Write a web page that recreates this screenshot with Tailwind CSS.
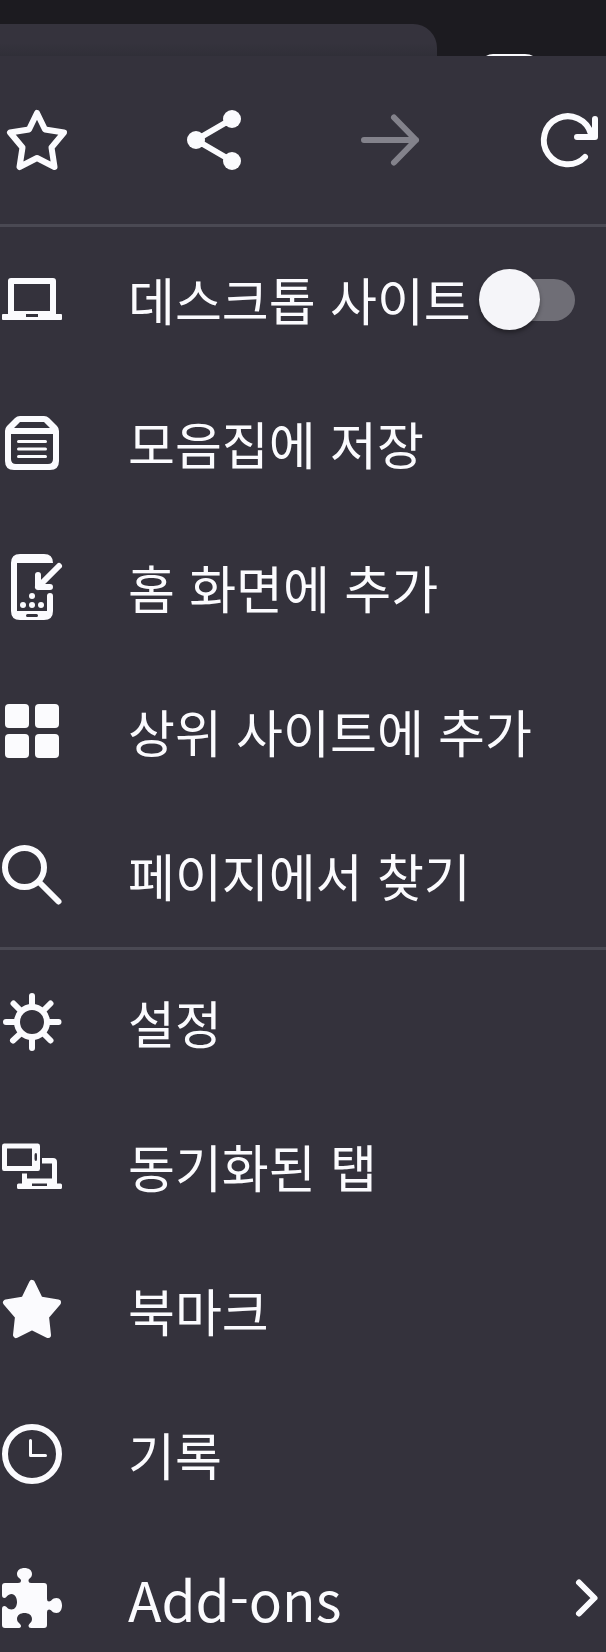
<!DOCTYPE html>
<html lang="ko">
<head>
<meta charset="utf-8">
<meta name="viewport" content="width=device-width, initial-scale=1">
<title>메뉴</title>
<script src="https://cdn.jsdelivr.net/npm/@tailwindcss/browser@4"></script>
</head>
<body class="bg-[#1c1b20]">
<div class="flex h-screen flex-col overflow-hidden font-['Noto_Sans_CJK_KR','Noto_Sans',sans-serif] text-[51px] leading-[72px] text-[#fbfbfe]">
  <header class="flex h-14 shrink-0 items-end overflow-hidden">
    <div class="mr-12 h-8 flex-1 rounded-tr-3xl bg-linear-to-b from-[#35333d] from-60% to-[#302f38]"></div>
    <svg class="mr-[69px] h-0.5 w-13" viewBox="0 0 52 2" fill="#fbfbfe" aria-hidden="true"><path d="M1 2Q4 0 8 0H40Q45 0 48 2Z"/></svg>
  </header>

  <main class="flex flex-1 flex-col bg-[#34323c]">
    <nav class="flex h-[168px] shrink-0 items-center justify-between pr-1 pl-px" aria-label="페이지 도구">
      <button type="button" aria-label="북마크 추가">
        <svg class="size-18" viewBox="0 0 72 72" fill="none" stroke="currentColor" stroke-width="6" stroke-linejoin="round"><path d="M36 9 44 25.5 63 28.5 50.500 43.500 53.500 63 36 54 18.500 63 21.500 43.500 9 28.500 28 25.500Z"/></svg>
      </button>
      <button type="button" aria-label="공유">
        <svg class="size-18" viewBox="0 0 72 72" fill="currentColor"><path d="M55 15 19 36 55 57" fill="none" stroke="currentColor" stroke-width="6"/><circle cx="55" cy="15" r="9"/><circle cx="19" cy="36" r="9"/><circle cx="55" cy="57" r="9"/></svg>
      </button>
      <button type="button" aria-label="앞으로" class="text-[#83828b]">
        <svg class="size-18" viewBox="0 0 72 72" fill="none" stroke="currentColor" stroke-width="6" stroke-linecap="round" stroke-linejoin="round"><path d="M10 36H62M40 13.500 62 36 40 58.500"/></svg>
      </button>
      <button type="button" aria-label="새로 고침">
        <svg class="size-18" viewBox="0 0 72 72" fill="none" stroke="currentColor" stroke-width="6" stroke-linecap="round" stroke-linejoin="round"><path d="M55 53A24 24 0 1 1 61 30"/><path d="M65 15V33H47"/><path d="M58 29 61 25 65 33Z" stroke="none" fill="currentColor"/></svg>
      </button>
    </nav>

    <section class="shrink-0 border-t-3 border-[#4a4953]">
      <label class="flex h-36 items-center">
        <svg class="h-18 w-16 shrink-0" viewBox="0 0 64 72" fill="currentColor" aria-hidden="true"><path fill-rule="evenodd" d="M11 15H53Q56 15 56 18V51H61Q62 51 62 52V56Q62 57 61 57H3Q2 57 2 56V52Q2 51 3 51H8V18Q8 15 11 15ZM14 21V48H50V21ZM26 51V54H38V51Z"/></svg>
        <span class="ml-16 whitespace-nowrap">데스크톱 사이트</span>
        <input type="checkbox" role="switch" class="relative mt-0.5 mr-[31px] ml-auto h-[42px] w-[90px] shrink-0 appearance-none rounded-full bg-[#6f6e76] before:absolute before:-top-[10px] before:-left-[6px] before:size-[61px] before:rounded-full before:bg-[#f5f5f9] before:shadow-[0_3px_4px_rgba(0,0,0,0.35)] before:content-[''] checked:before:left-9">
      </label>
      <button type="button" class="flex h-36 w-full items-center text-left">
        <svg class="h-18 w-16 shrink-0" viewBox="0 0 64 72" fill="currentColor" aria-hidden="true"><path fill-rule="evenodd" d="M20 9H44Q47 9 49 11L57 19Q59 21 59 24V54Q59 63 50 63H14Q5 63 5 54V24Q5 21 7 19L15 11Q17 9 20 9ZM20 15 14 21H50L44 15ZM11 27V52Q11 57 16 57H48Q53 57 53 52V27Z"/><path d="M18.500 34.500H45.500M18.500 42H45.500M18.500 49.500H45.500" stroke="currentColor" stroke-width="3" stroke-linecap="round"/></svg>
        <span class="ml-16">모음집에 저장</span>
      </button>
      <button type="button" class="flex h-36 w-full items-center text-left">
        <svg class="h-18 w-16 shrink-0" viewBox="0 0 64 72" fill="currentColor" aria-hidden="true"><path fill-rule="evenodd" d="M20 3H44Q53 3 53 12H17V60H47V45A3 3 0 0 1 53 45V60Q53 69 44 69H20Q11 69 11 60V12Q11 3 20 3ZM27.500 63A1.500 1.500 0 0 0 27.500 66H36.500A1.500 1.500 0 0 0 36.500 63Z"/><path d="M59 15 38 36M38 24V36H50" fill="none" stroke="currentColor" stroke-width="6" stroke-linecap="round" stroke-linejoin="round"/><circle cx="32" cy="45" r="3"/><circle cx="23" cy="54" r="3"/><circle cx="32" cy="54" r="3"/><circle cx="41" cy="54" r="3"/></svg>
        <span class="ml-16">홈 화면에 추가</span>
      </button>
      <button type="button" class="flex h-36 w-full items-center text-left">
        <svg class="h-18 w-16 shrink-0" viewBox="0 0 64 72" fill="currentColor" aria-hidden="true"><rect x="5" y="9" width="24" height="24" rx="4"/><rect x="35" y="9" width="24" height="24" rx="4"/><rect x="5" y="39" width="24" height="24" rx="4"/><rect x="35" y="39" width="24" height="24" rx="4"/></svg>
        <span class="ml-16">상위 사이트에 추가</span>
      </button>
      <button type="button" class="flex h-36 w-full items-center text-left">
        <svg class="h-18 w-16 shrink-0" viewBox="0 0 64 72" fill="none" stroke="currentColor" stroke-width="6" stroke-linecap="round" aria-hidden="true"><circle cx="24.500" cy="28.500" r="19.500"/><path d="M39 43 58.500 62.500"/></svg>
        <span class="ml-16">페이지에서 찾기</span>
      </button>
    </section>

    <section class="shrink-0 border-t-3 border-[#4a4953]">
      <button type="button" class="flex h-36 w-full items-center text-left">
        <svg class="h-18 w-16 shrink-0" viewBox="0 0 64 72" fill="none" stroke="currentColor" stroke-width="6" stroke-linecap="round" aria-hidden="true"><circle cx="32" cy="36" r="15"/><path d="M32 10V20M32 52V62M6 36H16M48 36H58.500M13.500 17.500 20 24M50.500 17.500 44 24M13 54.500 20 48M50.500 54.500 44 48"/></svg>
        <span class="ml-16">설정</span>
      </button>
      <button type="button" class="flex h-36 w-full items-center text-left">
        <svg class="h-18 w-16 shrink-0" viewBox="0 0 64 72" fill="currentColor" aria-hidden="true"><path fill-rule="evenodd" d="M4 13.500H38Q40 13.500 40 16V38.500Q40 41 38 41H4Q2 41 2 38.500V16Q2 13.500 4 13.500ZM7 18.500V36H32V18.500ZM36 23Q34.500 23 34.500 25V29Q34.500 31 36 31Q37 31 37 29V25Q37 23 36 23Z"/><path fill-rule="evenodd" d="M42 28H53Q57 28 57 32V53.500H60.500Q62 53.500 62 55V57.500Q62 59 60.500 59H18.500Q17 59 17 57.500V55Q17 53.500 18.500 53.500H22V43.500H27V48.500H52V33.500H42ZM32 53.500V56H47V53.500Z"/></svg>
        <span class="ml-16">동기화된 탭</span>
      </button>
      <button type="button" class="flex h-36 w-full items-center text-left">
        <svg class="h-18 w-16 shrink-0" viewBox="0 0 64 72" fill="currentColor" stroke="currentColor" stroke-width="6" stroke-linejoin="round" aria-hidden="true"><path d="M32 9 40 25.500 58 28.500 46 42.500 48 61 32 53 16 61 18 42.500 6 28.500 24 25.500Z"/></svg>
        <span class="ml-16">북마크</span>
      </button>
      <button type="button" class="flex h-36 w-full items-center text-left">
        <svg class="h-18 w-16 shrink-0" viewBox="0 0 64 72" fill="none" stroke="currentColor" stroke-linecap="round" stroke-linejoin="round" aria-hidden="true"><circle cx="32" cy="36" r="27" stroke-width="6"/><path d="M30.500 22.500V37.500H45.500" stroke-width="3"/></svg>
        <span class="ml-16">기록</span>
      </button>
      <button type="button" class="flex h-36 w-full items-center text-left">
        <svg class="h-18 w-16 shrink-0" viewBox="0 0 64 72" fill="currentColor" aria-hidden="true"><path d="M5 21H18Q21 21 21 18.500C21 16.500 17 16 17 12C17 8 20.500 6 24.500 6S32 8 32 12C32 16 28.500 16.500 28.500 18.500Q28.500 21 31 21H44Q47 21 47 24V37Q47 39.500 49 39.500C51.500 39.500 52 36 56.500 36C60 36 62 39.500 62 43.500S60 51 56.500 51C52 51 51.500 47.500 49 47.500Q47 47.500 47 50V63Q47 66 44 66H31Q28.500 66 28.500 64C28.500 61.500 32 61 32 57C32 53 28.500 51 24.500 51S17 53 17 57C17 61 21 61.500 21 64Q21 66 18 66H5Q2 66 2 63V47Q2 44 4.500 44C6.500 44 7.500 47.500 11.500 47.500C15 47.500 17 44 17 40S15 32 11.500 32C7.500 32 6.500 36 4.500 36Q2 36 2 33V24Q2 21 5 21Z"/></svg>
        <span class="ml-16 text-[55px]">Add-ons</span>
        <svg class="mr-1.5 ml-auto h-10 w-7 shrink-0" viewBox="0 0 28 40" fill="none" stroke="currentColor" stroke-width="6" stroke-linecap="round" stroke-linejoin="round" aria-hidden="true"><path d="M7 4.500 22.500 20 7 35.500"/></svg>
      </button>
    </section>
  </main>
</div>
</body>
</html>
